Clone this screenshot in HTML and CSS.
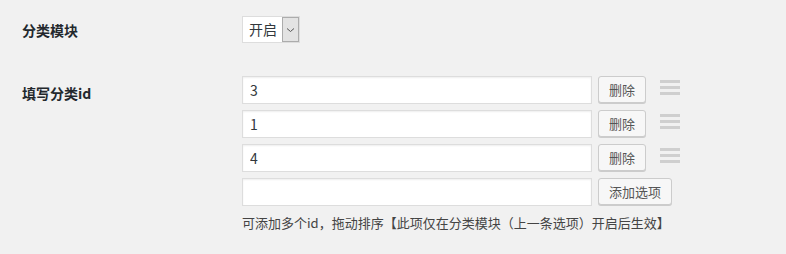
FILE: index.html
```html
<!DOCTYPE html>
<html lang="zh-CN">
<head>
    <meta charset="UTF-8">
    <title>分类设置</title>
    <link rel="stylesheet" href="styles.css">
</head>
<body>
    <div class="form-table">
        <div class="row row-switch">
            <div class="th">分类模块</div>
            <div class="td">
                <div class="fake-select">
                    <span class="select-value">开启</span>
                    <span class="select-arrow">
                        <svg width="9" height="6" viewBox="0 0 9 6"><path d="M1 1.5 L4.5 4.5 L8 1.5" fill="none" stroke="#555" stroke-width="1"/></svg>
                    </span>
                </div>
            </div>
        </div>

        <div class="row row-ids">
            <div class="th">填写分类id</div>
            <div class="td">
                <div class="opt-list">
                    <div class="opt-item">
                        <input type="text" class="regular-text" value="3">
                        <button class="button">删除</button>
                        <span class="handle"><i></i><i></i><i></i></span>
                    </div>
                    <div class="opt-item">
                        <input type="text" class="regular-text" value="1">
                        <button class="button">删除</button>
                        <span class="handle"><i></i><i></i><i></i></span>
                    </div>
                    <div class="opt-item">
                        <input type="text" class="regular-text" value="4">
                        <button class="button">删除</button>
                        <span class="handle"><i></i><i></i><i></i></span>
                    </div>
                    <div class="opt-item">
                        <input type="text" class="regular-text" value="">
                        <button class="button">添加选项</button>
                    </div>
                </div>
                <p class="description">可添加多个id，拖动排序【此项仅在分类模块（上一条选项）开启后生效】</p>
            </div>
        </div>
    </div>
</body>
</html>
```

FILE: styles.css
```css
* {
    margin: 0;
    padding: 0;
    box-sizing: border-box;
}

body {
    background: #f1f1f1;
    color: #444;
    font-family: "Noto Sans CJK SC", "Noto Sans", sans-serif;
    font-size: 13px;
}

.form-table {
    padding-left: 22px;
}

.row {
    display: flex;
}

.th {
    width: 220px;
    flex-shrink: 0;
    font-size: 14px;
    font-weight: bold;
    color: #23282d;
}

.row-switch {
    padding-top: 16px;
}

.row-switch .th {
    line-height: 29px;
}

.row-ids {
    padding-top: 31px;
}

.row-ids .th {
    line-height: 34px;
}

/* select box */
.fake-select {
    display: inline-flex;
    width: 58px;
    height: 27px;
    background: #fff;
    border: 1px solid #ddd;
}

.select-value {
    flex: 1;
    padding-left: 6px;
    line-height: 25px;
    font-size: 14px;
    color: #32373c;
}

.select-arrow {
    width: 17px;
    display: flex;
    align-items: center;
    justify-content: center;
    background: #e3e3e3;
    border: 1px solid #acacac;
}

/* option rows */
.opt-list {
    display: flex;
    flex-direction: column;
    gap: 6px;
}

.opt-item {
    display: flex;
    align-items: center;
}

.regular-text {
    width: 350px;
    height: 28px;
    padding: 0 7px;
    border: 1px solid #ddd;
    box-shadow: inset 0 1px 2px rgba(0, 0, 0, 0.07);
    background: #fff;
    color: #32373c;
    font-family: inherit;
    font-size: 14px;
    outline: none;
}

.button {
    margin-left: 6px;
    height: 27px;
    padding: 0 10px;
    background: #f7f7f7;
    border: 1px solid #ccc;
    border-radius: 3px;
    box-shadow: 0 1px 0 #ccc;
    color: #555;
    font-family: inherit;
    font-size: 13px;
    cursor: pointer;
    margin-top: -1px;
}

.handle {
    display: flex;
    flex-direction: column;
    gap: 3px;
    margin-left: 14px;
    align-self: flex-start;
    margin-top: 4px;
}

.handle i {
    display: block;
    width: 20px;
    height: 3px;
    background: #cfcfcf;
}

.description {
    margin-top: 7px;
    line-height: 20px;
    font-size: 13px;
    color: #444;
}
```
